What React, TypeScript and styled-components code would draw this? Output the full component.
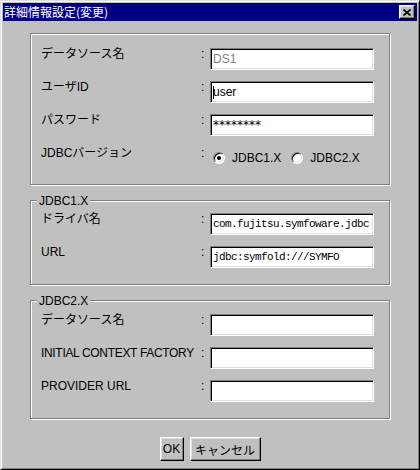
import styled, { createGlobalStyle } from "styled-components";

const GlobalStyle = createGlobalStyle`
  html, body {
    margin: 0;
    padding: 0;
    background: #c0c0c0;
  }
  body {
    font-family: "Liberation Sans", "Noto Sans CJK JP", sans-serif;
    font-size: 12px;
    color: #000;
  }
`

const Window = styled.div`
  box-sizing: border-box;
  width: 420px;
  height: 470px;
  display: flex;
  flex-direction: column;
  padding: 2px;
  background: #c0c0c0;
  border: 1px solid;
  border-color: #dfdfdf #000 #000 #dfdfdf;
  box-shadow: inset 1px 1px 0 #fff, inset -1px -1px 0 #808080;
`

const TitleBar = styled.div`
  height: 18px;
  display: flex;
  align-items: center;
  justify-content: space-between;
  padding: 0 2px 0 1px;
  background: #000080;
  color: #fff;
`

const TitleText = styled.span`
  font-family: "Noto Sans CJK JP", sans-serif;
  font-size: 12px;
  line-height: 18px;
`

const CloseButton = styled.button`
  box-sizing: border-box;
  width: 16px;
  height: 14px;
  padding: 0;
  display: flex;
  align-items: center;
  justify-content: center;
  background: #c0c0c0;
  border: 1px solid;
  border-color: #fff #000 #000 #fff;
  box-shadow: inset -1px -1px 0 #808080, inset 1px 1px 0 #dfdfdf;
`

const Body = styled.div`
  display: flex;
  flex-direction: column;
  gap: 15px;
  padding: 12px 27px 0;
`

const Group = styled.div<{ $pad: string }>`
  position: relative;
  display: grid;
  grid-template-columns: 160px 9px 164px;
  row-gap: 11px;
  align-items: start;
  padding: ${p => p.$pad};
  border: 1px solid #808080;
  box-shadow: inset 1px 1px 0 #fff, 1px 1px 0 #fff;
`

const Caption = styled.span`
  position: absolute;
  top: -7px;
  left: 6px;
  padding: 0 2px;
  line-height: 14px;
  background: #c0c0c0;
`

const Label = styled.span<{ $tight?: boolean }>`
  line-height: 13px;
  white-space: nowrap;
  letter-spacing: ${p => (p.$tight ? "-0.32px" : "0")};
`

const Colon = styled.span`
  line-height: 13px;
`

const fieldFont = (p: { $mono?: boolean; $secret?: boolean }) =>
  p.$mono ? '"Liberation Mono", monospace' : p.$secret ? '"DejaVu Sans", sans-serif' : '"Liberation Sans", sans-serif'

const Field = styled.div<{ $mono?: boolean; $muted?: boolean; $secret?: boolean }>`
  box-sizing: border-box;
  height: 22px;
  display: flex;
  align-items: center;
  padding: 0 2px;
  overflow: hidden;
  white-space: nowrap;
  background: #fff;
  color: ${p => (p.$muted ? "#808080" : "#000")};
  font-family: ${fieldFont};
  font-size: ${p => (p.$mono ? "11px" : "12px")};
  letter-spacing: ${p => (p.$mono ? "-0.6px" : "0")};
  border: 1px solid;
  border-color: #808080 #fff #fff #808080;
  box-shadow: inset 1px 1px 0 #000, inset -1px -1px 0 #dfdfdf;
`

const Caret = styled.span`
  display: inline-block;
  width: 1px;
  height: 13px;
  margin-right: -1px;
  background: #000;
`

const RadioRow = styled.div`
  height: 22px;
  display: flex;
  align-items: center;
  gap: 10px;
  padding-left: 3px;
`

const RadioOption = styled.label`
  display: flex;
  align-items: center;
  gap: 7px;
`

const RadioCircle = styled.span<{ $checked?: boolean }>`
  position: relative;
  box-sizing: border-box;
  width: 12px;
  height: 12px;
  border-radius: 50%;
  background: #fff;
  border: 1px solid;
  border-color: #808080 #fff #fff #808080;
  box-shadow: inset 1px 1px 0 #000, inset -1px -1px 0 #dfdfdf;

  &::after {
    content: "";
    display: ${p => (p.$checked ? "block" : "none")};
    position: absolute;
    top: 3px;
    left: 3px;
    width: 4px;
    height: 4px;
    border-radius: 50%;
    background: #000;
  }
`

const ButtonRow = styled.div`
  display: flex;
  justify-content: center;
  gap: 6px;
  margin-top: 3px;
`

const Button = styled.button<{ $w: number }>`
  box-sizing: border-box;
  width: ${p => p.$w}px;
  height: 24px;
  padding: 0;
  font-family: "Liberation Sans", "Noto Sans CJK JP", sans-serif;
  font-size: 12px;
  color: #000;
  background: #c0c0c0;
  border: 1px solid;
  border-color: #fff #000 #000 #fff;
  box-shadow: inset -1px -1px 0 #808080, inset 1px 1px 0 #dfdfdf;
`

const CloseIcon = () => (
  <svg width="8" height="7" viewBox="0 0 8 7">
    <path d="M0.5 0.5 L7.5 6.5 M7.5 0.5 L0.5 6.5" stroke="#000" strokeWidth="1.6" fill="none" />
  </svg>
)

const App = () => {
  return (
    <>
      <GlobalStyle />
      <Window>
        <TitleBar>
          <TitleText>詳細情報設定(変更)</TitleText>
          <CloseButton>
            <CloseIcon />
          </CloseButton>
        </TitleBar>
        <Body>
          <Group $pad="14px 15px 15px 10px">
            <Label>データソース名</Label>
            <Colon>:</Colon>
            <Field $muted>DS1</Field>

            <Label>ユーザID</Label>
            <Colon>:</Colon>
            <Field><Caret />user</Field>

            <Label>パスワード</Label>
            <Colon>:</Colon>
            <Field $secret>********</Field>

            <Label>JDBCバージョン</Label>
            <Colon>:</Colon>
            <RadioRow>
              <RadioOption>
                <RadioCircle $checked />
                JDBC1.X
              </RadioOption>
              <RadioOption>
                <RadioCircle />
                JDBC2.X
              </RadioOption>
            </RadioRow>
          </Group>

          <Group $pad="12px 15px 16px 10px">
            <Caption>JDBC1.X</Caption>
            <Label>ドライバ名</Label>
            <Colon>:</Colon>
            <Field $mono>com.fujitsu.symfoware.jdbc</Field>

            <Label>URL</Label>
            <Colon>:</Colon>
            <Field $mono>jdbc:symfold:///SYMFO</Field>
          </Group>

          <Group $pad="13px 15px 16px 10px">
            <Caption>JDBC2.X</Caption>
            <Label>データソース名</Label>
            <Colon>:</Colon>
            <Field />

            <Label $tight>INITIAL CONTEXT FACTORY</Label>
            <Colon>:</Colon>
            <Field />

            <Label>PROVIDER URL</Label>
            <Colon>:</Colon>
            <Field />
          </Group>

          <ButtonRow>
            <Button $w={24}>OK</Button>
            <Button $w={71}>キャンセル</Button>
          </ButtonRow>
        </Body>
      </Window>
    </>
  )
}

export default App;
